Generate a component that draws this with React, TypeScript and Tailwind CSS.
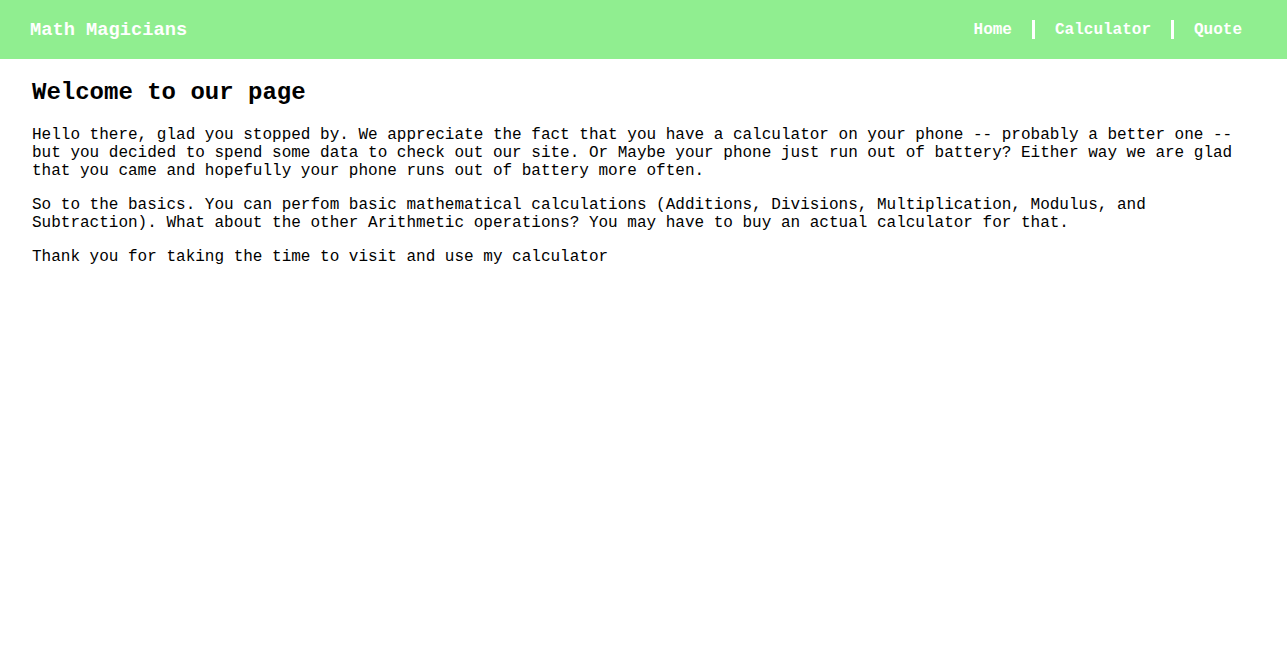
const links = ["Home", "Calculator", "Quote"];

function Header() {
  return (
    <header className="flex h-[59px] items-center justify-between bg-[#90ee90] pl-[30px] pr-[45px] text-white">
      <h1 className="pt-[3px] text-[18.72px] font-bold leading-[1.133]">Math Magicians</h1>
      <nav className="flex items-center gap-5 pt-[2px] text-base font-bold">
        {links.map((label, i) => (
          <div key={label} className="flex items-center gap-5">
            {i > 0 && <span className="mb-[2px] h-[19px] w-[3px] bg-white" />}
            <a href="#" className="leading-[1.133]">
              {label}
            </a>
          </div>
        ))}
      </nav>
    </header>
  );
}

export default function App() {
  return (
    <div className="min-h-screen bg-white text-black font-['Liberation_Mono','Courier_New',monospace]">
      <Header />
      <main className="px-8">
        <h2 className="mt-5 mb-5 text-2xl font-bold leading-[1.133]">Welcome to our page</h2>
        <div className="flex flex-col gap-4 text-base leading-[18px]">
          <p>
            Hello there, glad you stopped by. We appreciate the fact that you have a calculator on your
            phone -- probably a better one -- but you decided to spend some data to check out our site.
            Or Maybe your phone just run out of battery? Either way we are glad that you came and
            hopefully your phone runs out of battery more often.
          </p>
          <p>
            So to the basics. You can perfom basic mathematical calculations (Additions, Divisions,
            Multiplication, Modulus, and Subtraction). What about the other Arithmetic operations? You
            may have to buy an actual calculator for that.
          </p>
          <p>Thank you for taking the time to visit and use my calculator</p>
        </div>
      </main>
    </div>
  );
}
